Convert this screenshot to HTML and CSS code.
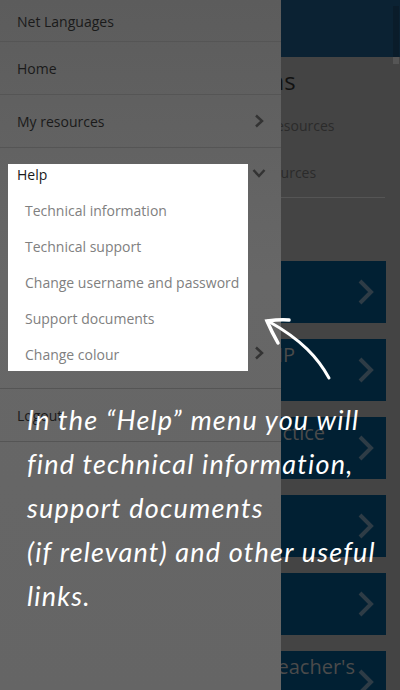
FILE: index.html
```html
<!DOCTYPE html>
<html lang="en">
  <head>
    <meta charset="UTF-8" />
    <meta name="viewport" content="width=device-width, initial-scale=1.0" />
    <title>Net Languages</title>
    <link rel="stylesheet" href="styles.css">
  </head>
  <body>
    <div class="screen">
      <main class="content">
        <header class="topbar"></header>
        <h2 class="title">Instructions</h2>
        <p class="link link-one">My resources</p>
        <p class="link link-two">Resources</p>
        <hr class="rule" />
        <div class="tiles">
          <div class="tile"><svg class="tile-arrow" viewBox="0 0 18 28"><path d="M3 3l11 11L3 25" /></svg></div>
          <div class="tile"><span class="tile-text esp">TIP</span><svg class="tile-arrow" viewBox="0 0 18 28"><path d="M3 3l11 11L3 25" /></svg></div>
          <div class="tile"><span class="tile-text practice">Practice</span><svg class="tile-arrow" viewBox="0 0 18 28"><path d="M3 3l11 11L3 25" /></svg></div>
          <div class="tile"><svg class="tile-arrow" viewBox="0 0 18 28"><path d="M3 3l11 11L3 25" /></svg></div>
          <div class="tile"><svg class="tile-arrow" viewBox="0 0 18 28"><path d="M3 3l11 11L3 25" /></svg></div>
          <div class="tile"><span class="tile-text teacher">Teacher's</span><svg class="tile-arrow" viewBox="0 0 18 28"><path d="M3 3l11 11L3 25" /></svg></div>
        </div>
      </main>
      <div class="scrollbar"></div>

      <nav class="drawer">
        <div class="row brand">Net Languages</div>
        <div class="row">Home</div>
        <div class="row">My resources<svg class="chev" viewBox="0 0 10 14"><path d="M2 1.500l6 5.500-6 5.500" /></svg></div>
        <div class="row help-row"><svg class="chev" viewBox="0 0 14 10"><path d="M1.500 2l5.500 6 5.500-6" /></svg></div>
        <div class="row last-group"><svg class="chev" viewBox="0 0 10 14"><path d="M2 1.500l6 5.500-6 5.500" /></svg></div>
        <div class="row">Logout</div>
      </nav>

      <div class="highlight">
        <div class="help-title">Help</div>
        <div class="sub">Technical information</div>
        <div class="sub">Technical support</div>
        <div class="sub">Change username and password</div>
        <div class="sub">Support documents</div>
        <div class="sub">Change colour</div>
      </div>

      <svg class="pointer" viewBox="0 0 70 66">
        <path d="M65 62C54 42 38 24 4 5" />
        <path class="pointer-head" d="M25 4C17 3 10 4 3 5C6 12 10 20 14 27" />
      </svg>

      <p class="note">In the “Help” menu you will<br />find technical information,<br />support documents<br />(if relevant) and other useful<br />links.</p>
    </div>
  </body>
</html>
```

FILE: styles.css
```css
html,
body {
  margin: 0;
  padding: 0;
}
body {
  font-family: "Open Sans", Arial, sans-serif;
  background-color: #444;
}
.screen {
  position: relative;
  width: 400px;
  height: 690px;
  overflow: hidden;
  background-color: #444;
}
.topbar {
  height: 57px;
  background-color: #0b2233;
}
.title {
  margin: 0;
  padding: 10px 0 0 163px;
  height: 41px;
  font-size: 24px;
  line-height: 28px;
  font-weight: 400;
  color: #111;
}
.link {
  margin: 0;
  box-sizing: border-box;
  padding-top: 8px;
  line-height: 20px;
  font-size: 14px;
  color: #2b2b2b;
}
.link-one {
  height: 47px;
  padding-left: 247px;
}
.link-two {
  height: 42px;
  padding-left: 249px;
}
.rule {
  margin: 0 15px 0 0;
  border: none;
  border-top: 1px solid #555;
}
.tiles {
  display: flex;
  flex-direction: column;
  gap: 16px;
  padding-top: 63px;
  margin-right: 14px;
}
.tile {
  position: relative;
  height: 62px;
  flex: none;
  background-color: #012033;
}
.tile-text {
  position: absolute;
  top: 4px;
  font-size: 20px;
  line-height: 24px;
  color: #4b4b4b;
}
.esp {
  right: 91px;
}
.practice {
  right: 61px;
}
.teacher {
  right: 31px;
}
.tile-arrow {
  position: absolute;
  right: 11px;
  top: 17px;
  width: 18px;
  height: 28px;
  fill: none;
  stroke: #2e3c46;
  stroke-width: 4;
}
.scrollbar {
  position: absolute;
  right: 1px;
  top: 6px;
  width: 6px;
  height: 58px;
  background: linear-gradient(#0a1c2a 51px, #555 51px);
}
.drawer {
  position: absolute;
  left: 0;
  top: 0;
  bottom: 0;
  width: 281px;
  background: linear-gradient(#5c5c5c, #676767 40%, #656565);
  font-size: 14px;
  color: #1a1a1a;
}
.row {
  display: flex;
  align-items: center;
  justify-content: space-between;
  box-sizing: border-box;
  height: 53px;
  padding: 0 17px;
  border-bottom: 1px solid #555;
}
.brand {
  height: 42px;
  padding-top: 2px;
}
.help-row {
  height: 54px;
  align-items: flex-start;
  padding-top: 20px;
  padding-right: 15px;
  border-bottom: none;
}
.last-group {
  height: 187px;
  align-items: flex-end;
  padding-bottom: 28px;
}
.chev {
  width: 10px;
  height: 14px;
  margin-left: auto;
  fill: none;
  stroke: #333;
  stroke-width: 2.500;
}
.help-row .chev {
  width: 14px;
  height: 10px;
}
.highlight {
  position: absolute;
  left: 8px;
  top: 164px;
  width: 240px;
  height: 207px;
  overflow: hidden;
  background-color: #fff;
}
.help-title {
  padding-left: 9px;
  height: 29px;
  line-height: 21px;
  font-size: 14px;
  color: #1a1a1a;
}
.sub {
  padding-left: 17px;
  height: 36px;
  line-height: 36px;
  font-size: 14px;
  color: #808080;
  white-space: nowrap;
}
.pointer {
  position: absolute;
  left: 264px;
  top: 316px;
  width: 70px;
  height: 66px;
  fill: none;
  stroke: #fff;
  stroke-width: 3;
  stroke-linecap: round;
}
.pointer-head {
  stroke-width: 3.500;
}
.note {
  position: absolute;
  left: 27px;
  top: 398px;
  margin: 0;
  font-family: Lato, sans-serif;
  font-style: italic;
  font-size: 27px;
  letter-spacing: 1.200px;
  line-height: 44px;
  color: #fff;
  white-space: nowrap;
}
```
